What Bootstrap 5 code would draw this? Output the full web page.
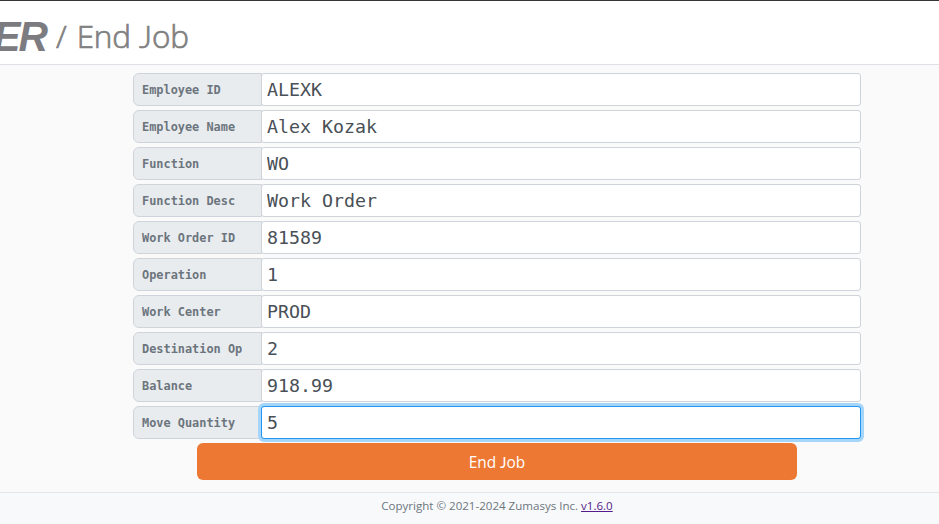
<!DOCTYPE html>
<html lang="en">
<head>
<meta charset="utf-8">
<meta name="viewport" content="width=device-width, initial-scale=1">
<title>End Job</title>
<link href="https://cdn.jsdelivr.net/npm/bootstrap@5.3.0/dist/css/bootstrap.min.css" rel="stylesheet">
<style>
  body { font-family: "Open Sans", "Noto Sans", sans-serif; background: #fafafa; height: 524px; overflow: hidden; }
  .page-head { height: 65px; background: #fff; border-top: 1px solid #35363a; border-bottom: 1px solid #dee2e6; color: #808080; overflow: hidden; }
  .brand-mark { width: 49px; height: 62px; display: block; }
  .head-title { font-size: 31.5px; font-weight: 300; line-height: 62px; margin-top: 4px; margin-left: 7px; white-space: nowrap; letter-spacing: -.15px; -webkit-text-stroke: .7px #808080; }
  .head-title .slash { margin-right: 2px; }
  .cap-j { font-family: Lato, sans-serif; }
  .job-form { width: 728px; margin-left: 133px; padding-top: 8px; gap: 4px; }
  .job-form .input-group { height: 33px; }
  .job-form .input-group-text, .job-form .form-control { font-family: "DejaVu Sans Mono", monospace; height: 33px; }
  .job-form .input-group-text { width: 129px; padding: 2px 8px 0; font-size: 11.9px; font-weight: 700; color: #6c757d; background: #e9ecef; border-color: #ced4da; border-radius: 6px 0 0 6px; }
  .job-form .form-control { padding: 0 5px; font-size: 18.27px; color: #495057; border-color: #ced4da; border-radius: 3px !important; }
  .job-form .is-active { border-color: #2196f3; box-shadow: 0 0 0 3px #a6d5fa; z-index: 5; }
  .btn-end { width: 600px; height: 37px; margin-left: 197px; margin-top: 4px; padding: 0; background: #ed7833; border: 0; border-radius: 6px; color: #fff; font-size: 15.4px; line-height: 38px; }
  .page-foot { height: 32px; margin-top: 12px; padding-left: 55px; border-top: 1px solid #e3e7ea; background: #f8f9fa; font-size: 11.55px; line-height: 26px; color: #6c757d; }
  .page-foot a { color: #551a8b; }
</style>
<script defer src="https://cdn.jsdelivr.net/npm/bootstrap@5.3.0/dist/js/bootstrap.bundle.min.js"></script>
</head>
<body>
<header class="page-head d-flex">
  <svg class="brand-mark" viewBox="0 0 49 62"><text transform="translate(0 50) scale(.95 1)" x="-7 19.5" y="0" font-family="Liberation Sans, sans-serif" font-size="43" font-weight="700" font-style="italic" fill="#7c7b80">ER</text></svg>
  <h1 class="head-title mb-0"><span class="slash">/</span> End <span class="cap-j">J</span>ob</h1>
</header>
<main>
  <form class="job-form d-flex flex-column">
    <div class="input-group flex-nowrap"><span class="input-group-text">Employee ID</span><input class="form-control" value="ALEXK" aria-label="Employee ID"></div>
    <div class="input-group flex-nowrap"><span class="input-group-text">Employee Name</span><input class="form-control" value="Alex Kozak" aria-label="Employee Name"></div>
    <div class="input-group flex-nowrap"><span class="input-group-text">Function</span><input class="form-control" value="WO" aria-label="Function"></div>
    <div class="input-group flex-nowrap"><span class="input-group-text">Function Desc</span><input class="form-control" value="Work Order" aria-label="Function Desc"></div>
    <div class="input-group flex-nowrap"><span class="input-group-text">Work Order ID</span><input class="form-control" value="81589" aria-label="Work Order ID"></div>
    <div class="input-group flex-nowrap"><span class="input-group-text">Operation</span><input class="form-control" value="1" aria-label="Operation"></div>
    <div class="input-group flex-nowrap"><span class="input-group-text">Work Center</span><input class="form-control" value="PROD" aria-label="Work Center"></div>
    <div class="input-group flex-nowrap"><span class="input-group-text">Destination Op</span><input class="form-control" value="2" aria-label="Destination Op"></div>
    <div class="input-group flex-nowrap"><span class="input-group-text">Balance</span><input class="form-control" value="918.99" aria-label="Balance"></div>
    <div class="input-group flex-nowrap"><span class="input-group-text">Move Quantity</span><input class="form-control is-active" value="5" aria-label="Move Quantity"></div>
  </form>
  <button type="button" class="btn btn-end d-block">End <span class="cap-j">J</span>ob</button>
</main>
<footer class="page-foot text-center">Copyright © 2021-2024 Zumasys Inc. <a href="#">v1.6.0</a></footer>
</body>
</html>
